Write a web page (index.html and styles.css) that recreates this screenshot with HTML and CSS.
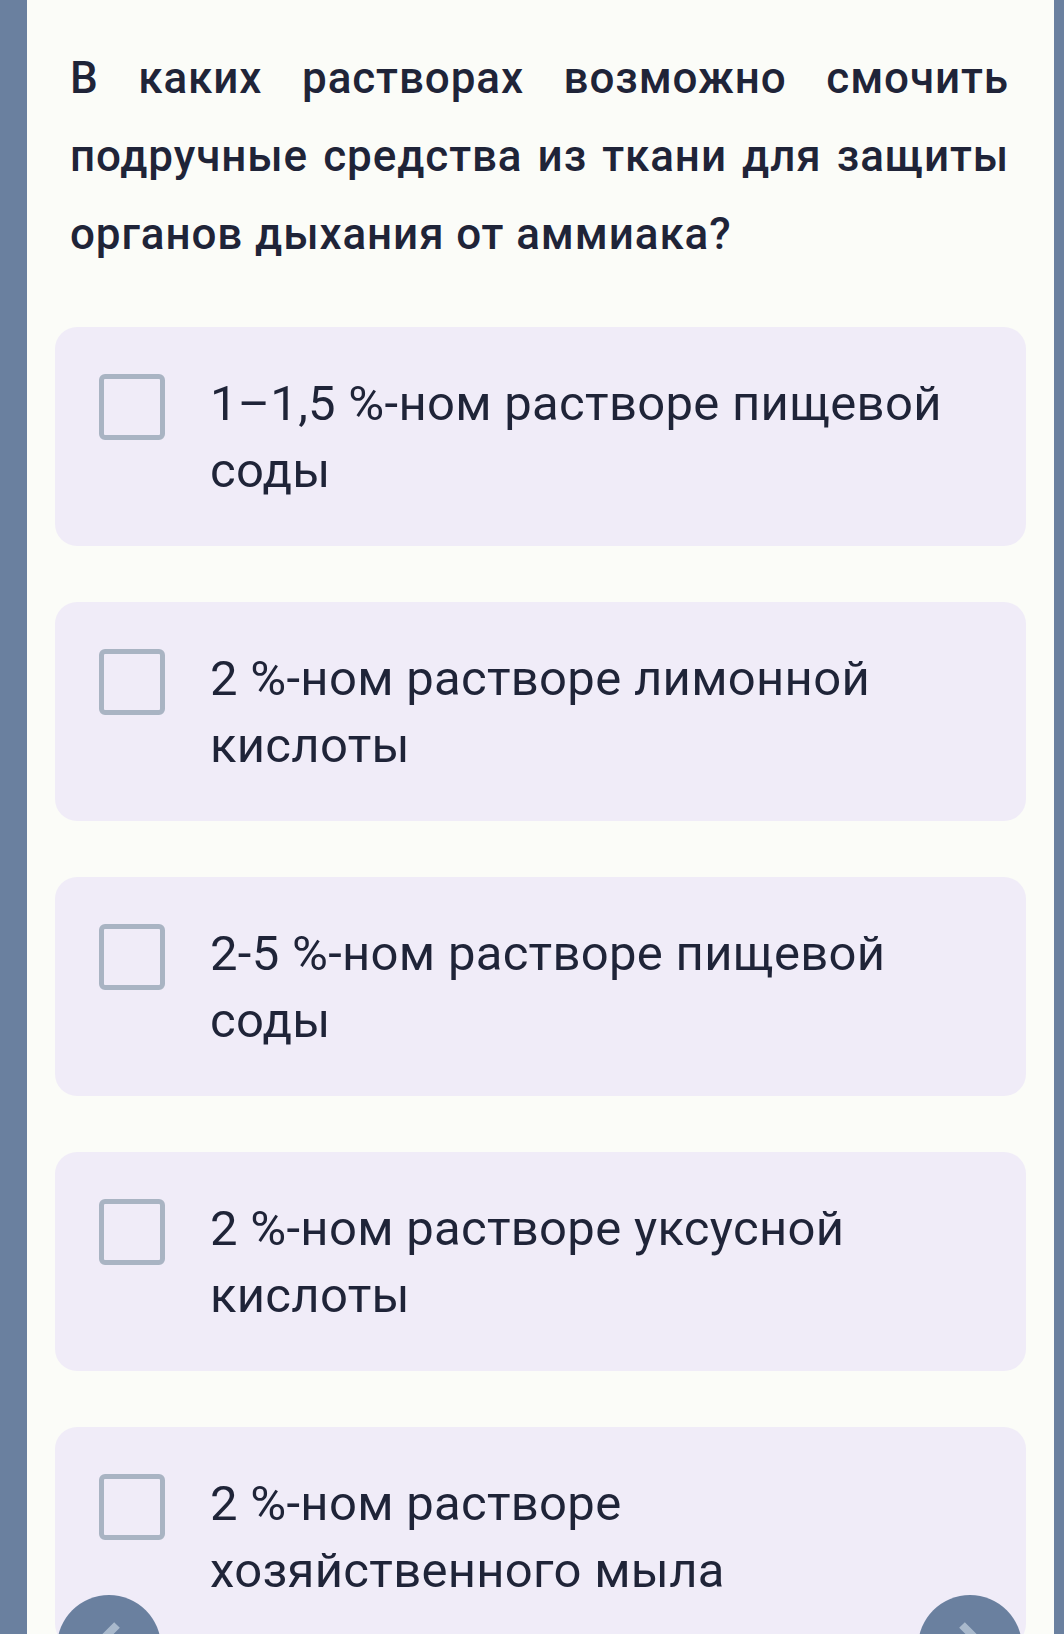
FILE: index.html
```html
<!DOCTYPE html>
<html lang="ru">
<head>
  <meta charset="UTF-8">
  <title>Тест</title>
  <link rel="stylesheet" href="styles.css">
</head>
<body>

  <div class="sheet">
    <p class="question">В каких растворах возможно смочить подручные средства из ткани для защиты органов дыхания от аммиака?</p>

    <div class="answers">
      <label class="answer">
        <span class="box"></span>
        <span class="text">1–1,5 %-ном растворе пищевой соды</span>
      </label>
      <label class="answer">
        <span class="box"></span>
        <span class="text">2 %-ном растворе лимонной кислоты</span>
      </label>
      <label class="answer">
        <span class="box"></span>
        <span class="text">2-5 %-ном растворе пищевой соды</span>
      </label>
      <label class="answer">
        <span class="box"></span>
        <span class="text">2 %-ном растворе уксусной кислоты</span>
      </label>
      <label class="answer">
        <span class="box"></span>
        <span class="text">2 %-ном растворе хозяйственного мыла</span>
      </label>
    </div>
  </div>

  <button class="nav nav-prev">
    <svg width="104" height="104" viewBox="0 0 104 104"><path d="M60 30 L38 52 L60 74" fill="none" stroke="#a9b9cc" stroke-width="8"/></svg>
  </button>
  <button class="nav nav-next">
    <svg width="104" height="104" viewBox="0 0 104 104"><path d="M44 30 L66 52 L44 74" fill="none" stroke="#a9b9cc" stroke-width="8"/></svg>
  </button>

</body>
</html>
```

FILE: styles.css
```css
html, body {
  margin: 0;
  height: 100%;
  overflow: hidden;
}

body {
  background: #6a809f;
  font-family: Roboto, 'Noto Sans', sans-serif;
  color: #1f2438;
}

.sheet {
  margin: 0 10px 0 27px;
  min-height: 100%;
  background: #fbfcf8;
  padding: 39px 28px 0;
  box-sizing: border-box;
}

.question {
  margin: 0 0 54px;
  padding: 0 17px 0 15px;
  font-size: 44px;
  font-weight: 500;
  line-height: 78px;
  letter-spacing: 0.9px;
  text-align: justify;
}

.answers {
  display: flex;
  flex-direction: column;
  gap: 56px;
}

.answer {
  display: flex;
  align-items: flex-start;
  gap: 45px;
  background: #f0ecf8;
  border-radius: 22px;
  padding: 43px 44px 42px;
}

.box {
  flex: none;
  width: 56px;
  height: 56px;
  margin-top: 4px;
  border: 5px solid #a9b4c3;
  border-radius: 6px;
}

.text {
  font-size: 49px;
  line-height: 67px;
  letter-spacing: 0.3px;
}

.nav {
  position: fixed;
  bottom: -65px;
  width: 104px;
  height: 104px;
  border: none;
  border-radius: 50%;
  background: #6a809f;
  padding: 0;
}

.nav svg {
  display: block;
}

.nav-prev {
  left: 57px;
}

.nav-next {
  right: 42px;
}
```
